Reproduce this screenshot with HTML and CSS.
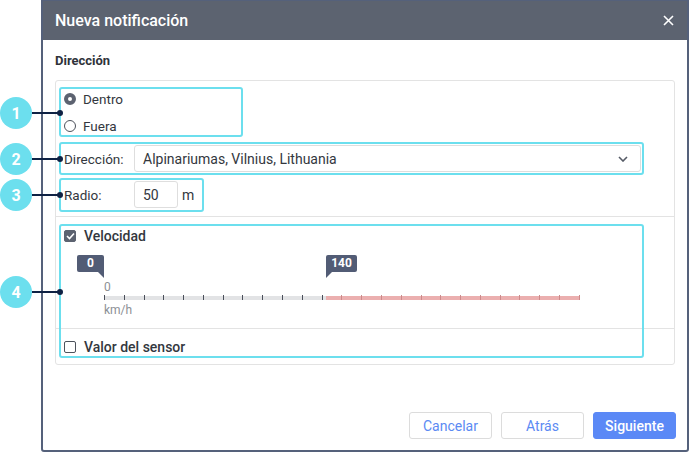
FILE: index.html
```html
<!DOCTYPE html>
<html lang="es">
<head>
<meta charset="utf-8">
<title>Nueva notificación</title>
<link rel="stylesheet" href="styles.css">
</head>
<body>
<div class="stage">
  <div class="dialog">
    <div class="dlg-head">
      <span class="dlg-title">Nueva notificación</span>
      <span class="close"><svg width="11" height="11" viewBox="0 0 11 11"><path d="M1 1 L10 10 M10 1 L1 10" stroke="#fff" stroke-width="1.6" fill="none"/></svg></span>
    </div>
    <div class="dlg-body">
      <div class="section-title">Dirección</div>
      <div class="panel">
        <div class="panel-top">
          <div class="radios">
            <label class="radio-row"><span class="radio checked"></span>Dentro</label>
            <label class="radio-row"><span class="radio"></span>Fuera</label>
          </div>
          <div class="field-row first">
            <span class="field-label">Dirección:</span>
            <div class="select">
              <span>Alpinariumas, Vilnius, Lithuania</span>
              <svg width="10" height="6" viewBox="0 0 10 6"><path d="M1 1 L5 5 L9 1" stroke="#555b66" stroke-width="1.6" fill="none"/></svg>
            </div>
          </div>
          <div class="field-row second">
            <span class="field-label">Radio:</span>
            <div class="input">50</div>
            <span class="unit">m</span>
          </div>
        </div>
        <div class="panel-speed">
          <label class="check-row"><span class="check checked"><svg width="9" height="8" viewBox="0 0 9 8"><path d="M1 4 L3.5 6.5 L8 1.5" stroke="#fff" stroke-width="1.6" fill="none"/></svg></span>Velocidad</label>
          <div class="slider">
            <div class="tips">
              <span class="tip tip-left" style="left:0%">0</span>
              <span class="tip tip-right" style="left:46.67%">140</span>
            </div>
            <div class="scale-min">0</div>
            <div class="track">
              <div class="bar" style="--split:46.67%"></div>
              <div class="ticks">
                <i></i><i></i><i></i><i></i><i></i><i></i><i></i><i></i><i></i><i></i><i></i><i></i>
                <i class="hi"></i><i class="hi"></i><i class="hi"></i><i class="hi"></i><i class="hi"></i><i class="hi"></i><i class="hi"></i><i class="hi"></i><i class="hi"></i><i class="hi"></i><i class="hi"></i><i class="hi"></i><i class="hi"></i>
              </div>
            </div>
            <div class="scale-unit">km/h</div>
          </div>
        </div>
        <div class="panel-sensor">
          <label class="check-row"><span class="check"></span>Valor del sensor</label>
        </div>
        <div class="hl hl1"></div>
        <div class="hl hl2"></div>
        <div class="hl hl3"></div>
        <div class="hl hl4"></div>
      </div>
    </div>
    <div class="dlg-foot">
      <button class="btn">Cancelar</button>
      <button class="btn">Atrás</button>
      <button class="btn primary">Siguiente</button>
    </div>
  </div>
  <div class="callout c1"><span class="num">1</span><span class="lead"></span><span class="dot"></span></div>
  <div class="callout c2"><span class="num">2</span><span class="lead"></span><span class="dot"></span></div>
  <div class="callout c3"><span class="num">3</span><span class="lead"></span><span class="dot"></span></div>
  <div class="callout c4"><span class="num">4</span><span class="lead"></span><span class="dot"></span></div>
</div>
</body>
</html>
```
FILE: styles.css
```css
* { box-sizing: border-box; }
html, body { margin: 0; padding: 0; background: #fff; }
body {
  width: 690px;
  height: 452px;
  overflow: hidden;
  font-family: Roboto, "Liberation Sans", sans-serif;
  font-size: 13.5px;
  color: #33373e;
}
.stage { position: relative; width: 690px; height: 452px; }

.dialog {
  margin-left: 41px;
  width: 648px;
  height: 452px;
  background: #fff;
  border: 2px solid #55617b;
  border-top-width: 1px;
  border-radius: 0 0 3px 3px;
  display: flex;
  flex-direction: column;
}
.dlg-head {
  height: 39px;
  background: #5c6370;
  display: flex;
  align-items: center;
  justify-content: space-between;
  padding: 0 13px 0 12px;
  flex: none;
}
.dlg-title { color: #fff; font-size: 16px; font-weight: 500; }
.close { display: flex; }

.dlg-body { padding: 13px 12px 0 12px; }
.section-title { font-size: 13px; font-weight: 700; line-height: 16px; color: #2f333a; margin-bottom: 11px; }

.panel {
  position: relative;
  border: 1px solid #e3e3e3;
  border-radius: 3px;
  height: 285px;
}
.panel-top { padding: 4px 8px 8px 8px; }
.radios { display: flex; flex-direction: column; }
.radio-row { display: flex; align-items: center; height: 27px; gap: 7px; }
.radio {
  width: 12px; height: 12px; border-radius: 50%;
  border: 1px solid #4d525c; background: #fff;
}
.radio.checked { border: 4px solid #5c6270; }

.field-row { display: flex; align-items: center; height: 27px; }
.field-row.first { margin-top: 6px; }
.field-row.second { margin-top: 9px; }
.field-label { width: 70px; flex: none; }
.select {
  width: 507px; height: 27px;
  border: 1px solid #dedede; border-radius: 3px;
  display: flex; align-items: center; justify-content: space-between;
  padding: 0 12px 0 8px;
  font-size: 14px;
}
.input {
  width: 44px; height: 27px;
  border: 1px solid #dedede; border-radius: 3px;
  display: flex; align-items: center; padding-left: 8px;
  font-size: 14px;
}
.unit { margin-left: 4px; font-size: 14px; }

.panel-speed { border-top: 1px solid #e3e3e3; padding: 9px 8px 11px 8px; }
.panel-sensor { border-top: 1px solid #e3e3e3; padding: 8px 8px 7px 8px; }
.check-row { display: flex; align-items: center; height: 20px; gap: 8px; font-weight: 500; font-size: 14px; }
.check {
  width: 12px; height: 12px; border-radius: 2px;
  border: 1px solid #4d525c; background: #fff;
  display: flex; align-items: center; justify-content: center;
}
.check.checked { background: #5c6270; border-color: #5c6270; }

.slider { margin: 9px 0 0 40px; width: 476px; }
.tips { position: relative; height: 24px; }
.tip {
  position: absolute; top: 0;
  height: 17px; line-height: 17px;
  padding: 0 5px; min-width: 27px; text-align: center;
  background: #525c75; color: #fff;
  font-size: 12px; font-weight: 700;
  border-radius: 2px;
}
.tip-left { transform: translateX(-100%); border-bottom-right-radius: 0; }
.tip-right { border-bottom-left-radius: 0; }
.tip::after {
  content: ""; position: absolute; top: 17px;
  border-top: 6px solid #525c75;
}
.tip-left::after { right: 0; border-left: 6px solid transparent; }
.tip-right::after { left: 0; border-right: 6px solid transparent; }

.scale-min, .scale-unit { color: #8c8f95; font-size: 12px; line-height: 14px; }
.scale-min { margin-top: 1px; }
.track { position: relative; height: 5px; margin-top: 1px; }
.bar {
  position: absolute; left: 0; right: 0; bottom: 0; height: 4px;
  background: linear-gradient(to right, #e2e3e5 var(--split), #ebafaf var(--split));
}
.ticks { position: absolute; inset: 0; display: flex; justify-content: space-between; }
.ticks i { width: 1px; height: 5px; background: #4a4f5a; }
.ticks i.hi { background: #cc8a8a; }
.scale-unit { margin-top: 3px; }

.hl { position: absolute; border: 2px solid #6cdfee; border-radius: 3px; pointer-events: none; }
.hl1 { left: 3px; top: 6px; width: 184px; height: 50px; }
.hl2 { left: 3px; top: 61px; width: 585px; height: 33px; }
.hl3 { left: 3px; top: 97px; width: 145px; height: 34px; }
.hl4 { left: 3px; top: 143px; width: 585px; height: 134px; }

.dlg-foot {
  margin-top: auto;
  display: flex; justify-content: flex-end; gap: 9px;
  padding: 0 11px 11px 0;
}
.btn {
  width: 83px; height: 27px;
  border: 1px solid #dcdcdc; border-radius: 3px;
  background: #fff; color: #5b8af3;
  font-family: inherit; font-size: 14px;
  padding: 0;
}
.btn.primary { background: #5b89f6; border-color: #5b89f6; color: #fff; font-weight: 500; }

.callout { position: absolute; left: 0; display: flex; align-items: center; height: 32px; }
.c1 { top: 97px; }
.c2 { top: 143px; }
.c3 { top: 179px; }
.c4 { top: 276px; }
.num {
  width: 32px; height: 32px; border-radius: 50%;
  background: #6cdfee; color: #fff;
  font-weight: 700; font-size: 16px;
  display: flex; align-items: center; justify-content: center;
}
.lead { width: 26px; height: 2px; background: #0f2244; }
.dot { width: 6px; height: 6px; border-radius: 50%; background: #0f2244; margin-left: -1px; }
```
